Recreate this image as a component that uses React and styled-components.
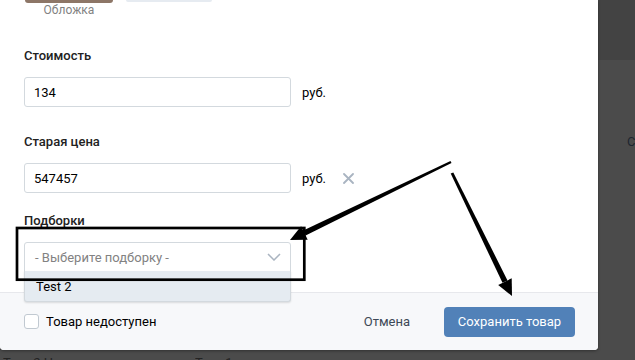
import React from "react";
import styled, { createGlobalStyle } from "styled-components";

const Global = createGlobalStyle`
  html, body { margin: 0; padding: 0; }
  body { font-family: Roboto, "Open Sans", "Liberation Sans", sans-serif; font-size: 13px; }
  * { box-sizing: border-box; }
`;

const Page = styled.div`
  position: relative;
  width: 635px;
  height: 360px;
  overflow: hidden;
  background: linear-gradient(#434343 0, #434343 60px, #4b4b4b 60px);
  display: flex;
  flex-direction: column;
`;

const Modal = styled.div`
  width: 598px;
  height: 350px;
  flex: none;
  background: #fff;
  border-radius: 0 0 4px 4px;
  box-shadow: 0 1px 3px rgba(0, 0, 0, 0.35);
  display: flex;
  flex-direction: column;
  position: relative;
  z-index: 1;
`;

const Body = styled.div`
  flex: 1;
  padding: 0 24px;
  display: flex;
  flex-direction: column;
`;

const Covers = styled.div`
  display: flex;
  gap: 13px;
  padding-left: 1px;
`;

const CoverCol = styled.div`
  width: ${(p) => p.$w}px;
  display: flex;
  flex-direction: column;
  align-items: center;
`;

const Thumb = styled.div`
  width: 100%;
  height: ${(p) => p.$h}px;
  background: ${(p) => p.$bg};
  border-radius: 0 0 3px 3px;
`;

const Caption = styled.div`
  font-size: 12px;
  line-height: 15px;
  color: #828282;
`;

const Label = styled.div`
  font-size: 13px;
  line-height: 16px;
  font-weight: 500;
  color: #222;
  margin-top: ${(p) => p.$top}px;
  margin-bottom: 13px;
`;

const Row = styled.div`
  display: flex;
  align-items: center;
  position: relative;
`;

const Input = styled.div`
  width: 267px;
  height: 30px;
  border: 1px solid #d3d9de;
  border-radius: 3px;
  background: #fff;
  padding: 0 9px;
  display: flex;
  align-items: center;
  font-size: 13px;
  color: #000;
`;

const Unit = styled.span`
  margin-left: 11px;
  font-size: 13px;
  color: #000;
`;

const Clear = styled.span`
  margin-left: 17px;
  display: flex;
  align-items: center;
`;

const Select = styled.div`
  position: relative;
  width: 267px;
  height: 30px;
  border: 1px solid #d3d9de;
  border-radius: 3px 3px 0 0;
  background: #fff;
  padding: 0 9px 0 10px;
  display: flex;
  align-items: center;
  justify-content: space-between;
  font-size: 13px;
  color: #828282;
`;

const Dropdown = styled.div`
  position: absolute;
  left: -1px;
  top: 28px;
  width: 267px;
  height: 31px;
  background: #e5ebf1;
  border: 1px solid #d3d9de;
  border-top: none;
  border-radius: 0 0 3px 3px;
  box-shadow: 0 1px 2px rgba(0, 0, 0, 0.12);
  padding: 0 11px;
  display: flex;
  align-items: center;
  font-size: 13px;
  color: #000;
  z-index: 3;
`;

const Footer = styled.div`
  height: 58px;
  flex: none;
  background: #f7f8fa;
  border-top: 1px solid #e7e8ec;
  border-radius: 0 0 4px 4px;
  padding: 0 23px 0 24px;
  display: flex;
  align-items: center;
`;

const Check = styled.span`
  width: 15px;
  height: 15px;
  border: 1px solid #c1c9d1;
  border-radius: 3px;
  background: #fff;
  flex: none;
`;

const CheckText = styled.span`
  margin-left: 7px;
  font-size: 13px;
  color: #000;
  flex: 1;
`;

const CancelButton = styled.span`
  font-size: 13px;
  color: #3d4956;
  margin-right: 34px;
`;

const PrimaryButton = styled.span`
  width: 131px;
  height: 30px;
  border-radius: 4px;
  background: #5181b8;
  color: #fff;
  font-size: 13px;
  display: flex;
  align-items: center;
  justify-content: center;
`;

const UnderText = styled.div`
  display: flex;
  padding: 5px 0 0 3px;
  font-size: 13px;
  line-height: 16px;
  color: #232323;
  white-space: nowrap;
`;

const UnderItem = styled.span`
  width: ${(p) => p.$w}px;
  flex: none;
  overflow: hidden;
`;

const SideGlyph = styled.span`
  position: absolute;
  left: 627px;
  top: 134px;
  font-size: 13px;
  color: #1e2630;
`;

const Overlay = styled.svg`
  position: absolute;
  left: 0;
  top: 0;
  pointer-events: none;
  z-index: 5;
`;

function arrow(sx, sy, tx, ty, w0, w1, len, half) {
  const dx = tx - sx;
  const dy = ty - sy;
  const L = Math.hypot(dx, dy);
  const ux = dx / L;
  const uy = dy / L;
  const nx = -uy;
  const ny = ux;
  const bx = tx - ux * len;
  const by = ty - uy * len;
  const shaft = [
    [sx + nx * w0, sy + ny * w0],
    [bx + nx * w1, by + ny * w1],
    [bx - nx * w1, by - ny * w1],
    [sx - nx * w0, sy - ny * w0],
  ];
  const head = [
    [tx, ty],
    [bx + nx * half, by + ny * half],
    [bx - nx * half, by - ny * half],
  ];
  const fmt = (pts) => pts.map((p) => p.map((v) => v.toFixed(1)).join(",")).join(" ");
  return { shaft: fmt(shaft), head: fmt(head) };
}

export default function App() {
  const a1 = arrow(451, 162, 290, 240, 1.1, 2.8, 16, 7.5);
  const a2 = arrow(452, 173, 512, 296, 1.4, 2.8, 16, 7.5);
  return (
    <Page>
      <Global />
      <Modal>
        <Body>
          <Covers>
            <CoverCol $w={88}>
              <Thumb $h={3} $bg="#8d7667" />
              <Caption>Обложка</Caption>
            </CoverCol>
            <CoverCol $w={86}>
              <Thumb $h={2} $bg="#e6ebf1" />
            </CoverCol>
          </Covers>

          <Label $top={30}>Стоимость</Label>
          <Row>
            <Input>134</Input>
            <Unit>руб.</Unit>
          </Row>

          <Label $top={27}>Старая цена</Label>
          <Row>
            <Input>547457</Input>
            <Unit>руб.</Unit>
            <Clear>
              <svg width="11" height="11" viewBox="0 0 11 11">
                <path d="M1 1 L10 10 M10 1 L1 10" stroke="#a9b4c1" strokeWidth="1.8" strokeLinecap="round" />
              </svg>
            </Clear>
          </Row>

          <Label $top={20}>Подборки</Label>
          <Row>
            <Select>
              <span>- Выберите подборку -</span>
              <svg width="14" height="8" viewBox="0 0 14 8">
                <path d="M1 1 L7 7 L13 1" fill="none" stroke="#aab4c0" strokeWidth="1.5" />
              </svg>
              <Dropdown>Test 2</Dropdown>
            </Select>
          </Row>
        </Body>
        <Footer>
          <Check />
          <CheckText>Товар недоступен</CheckText>
          <CancelButton>Отмена</CancelButton>
          <PrimaryButton>Сохранить товар</PrimaryButton>
        </Footer>
      </Modal>
      <UnderText>
        <UnderItem $w={192}>Тест 2 Ниж</UnderItem>
        <UnderItem $w={80}>Тест 1</UnderItem>
      </UnderText>
      <SideGlyph>С</SideGlyph>
      <Overlay width="635" height="360" viewBox="0 0 635 360">
        <rect x="17" y="228" width="287.3" height="51.7" fill="none" stroke="#000" strokeWidth="2.7" />
        <polygon points={a1.shaft} fill="#000" />
        <polygon points={a1.head} fill="#000" />
        <polygon points={a2.shaft} fill="#000" />
        <polygon points={a2.head} fill="#000" />
      </Overlay>
    </Page>
  );
}
